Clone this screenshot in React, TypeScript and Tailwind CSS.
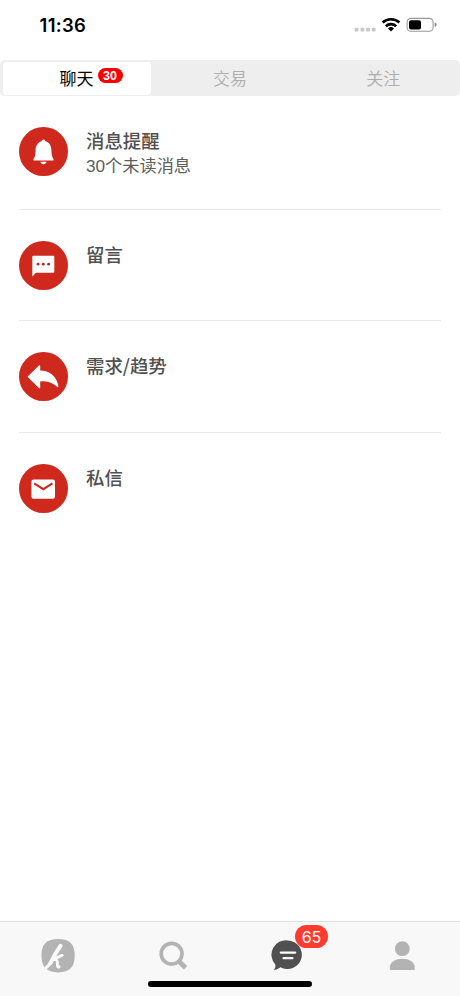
import type { ReactNode } from 'react';

const CJK = "font-['Liberation_Sans','Noto_Sans_CJK_SC',sans-serif]";

function StatusBar() {
  return (
    <header className="flex h-[60px] shrink-0 items-start justify-between pr-[23px] pl-[39.5px]">
      <span className="mt-[13px] font-['Inter',sans-serif] text-[18.4px] leading-6 font-semibold tracking-[0.35px] text-black">11:36</span>
      <svg className="mt-4 h-[18px] w-[84px]" viewBox="0 0 84 18" fill="none">
        <g fill="#c8c8c8">
          <rect x="1.7" y="11.8" width="3.8" height="3.8" rx="1" />
          <rect x="7.5" y="11.8" width="3.8" height="3.8" rx="1" />
          <rect x="13.1" y="11.8" width="3.8" height="3.8" rx="1" />
          <rect x="18.8" y="11.8" width="3.8" height="3.8" rx="1" />
        </g>
        <g stroke="#000" strokeWidth="2.7">
          <path d="M29.6 6.6a12.2 12.2 0 0 1 16.8 0" />
          <path d="M32.9 10.2a7.5 7.5 0 0 1 10.2 0" />
        </g>
        <path d="M35 12.4a4.4 4.4 0 0 1 6 0L38 15.4z" fill="#000" />
        <rect x="54.1" y="2.4" width="26" height="12.8" rx="3.8" stroke="#999" strokeWidth="1.1" />
        <rect x="56" y="4.3" width="12" height="9.2" rx="2" fill="#000" />
        <path d="M81.7 6.5q2 .6 2 2.2t-2 2.2z" fill="#888" />
      </svg>
    </header>
  );
}

function Tabs() {
  return (
    <nav className="grid h-9 shrink-0 grid-cols-3 rounded-[5px] bg-[#eeeeee] text-[17px] leading-[34px] font-[350] text-[#adadad]">
      <div className="mt-[2px] mr-[2.3px] mb-[1.5px] ml-[3px] flex h-[32.5px] justify-center rounded-[3px] bg-white text-black">
        <span className="relative top-px -left-[0.5px] h-[31px] font-normal">
          聊天
          <span className="absolute top-[5px] left-[38px] flex h-[15px] w-[25px] items-center justify-center rounded-full bg-[#fb0000] pt-px font-['Liberation_Sans',sans-serif] text-[12.5px] leading-none font-bold text-white">30</span>
        </span>
      </div>
      <div className="pt-[3px] text-center">交易</div>
      <div className="pt-[3px] text-center">关注</div>
    </nav>
  );
}

type RowProps = { title: string; subtitle?: string; size: string; last?: boolean; children: ReactNode };

function Row({ title, subtitle, size, last, children }: RowProps) {
  return (
    <section className={`mr-[19px] ml-[19px] flex shrink-0 ${size} ${last ? '' : 'border-b border-[#e8e8e8]'}`}>
      <svg className="size-[49px] shrink-0 overflow-visible" viewBox="0 0 49 49" fill="none">
        <circle cx="24.5" cy="24.5" r="24.5" fill="#cf291d" />
        {children}
      </svg>
      <div className="ml-[18px] text-[#505050]">
        <h2 className="font-['Noto_Sans_CJK_SC',sans-serif] text-[18.4px] leading-[26px] font-medium">{title}</h2>
        {subtitle && <p className="mt-[0.5px] text-[17.2px] leading-[26px] text-[#5c5c5c]">{subtitle}</p>}
      </div>
    </section>
  );
}

function TabBar() {
  return (
    <footer className="flex h-[75px] shrink-0 flex-col items-center border-t border-[#e0e0e0] bg-[#f8f8f8]">
      <div className="grid h-[59px] w-full grid-cols-4 justify-items-center pt-[13px]">
        <svg className="size-10" viewBox="0 0 40 40" fill="none">
          <path d="M20.1 4C31.6 4 36.7 9 36.7 20.6c0 11.8-5.1 16.8-16.6 16.8S3.5 32.4 3.5 20.6C3.5 9 8.6 4 20.1 4Z" fill="#b3b3b3" />
          <g stroke="#fafafa" strokeLinecap="round" strokeLinejoin="round">
            <path d="M22.6 10.8C18.8 16 15 22.7 12.6 28" strokeWidth="4" />
            <path d="M12.8 27c-1 2.1-2.2 4-4.4 5.5" strokeWidth="3.2" />
            <path d="M24.3 20.3c-2.6.4-5.3 2.4-8 4.1 2.8.2 3.5 2.1 3.1 5.1-.2 2.2.6 3 1.9 2.2" strokeWidth="2.8" />
          </g>
        </svg>
        <svg className="size-10" viewBox="0 0 40 40" fill="none" stroke="#b3b3b3">
          <circle cx="18.6" cy="18.7" r="10.4" strokeWidth="3.7" />
          <path d="m26 26.5 6.6 6.2" strokeWidth="5" />
        </svg>
        <div className="relative size-10">
          <svg className="size-10" viewBox="0 0 40 40" fill="none">
            <path d="M20 5.5a14.3 14.3 0 1 1-7.6 26.7c-1.8 1.3-4 2.4-6.6 2.8 1.4-1.5 1.9-3.5 1.5-5.6A14.3 14.3 0 0 1 20 5.5Z" fill="#505050" />
            <path d="M12.8 17.6h14.4M15.6 23.2h8.8" stroke="#fff" strokeWidth="2.3" strokeLinecap="round" />
          </svg>
          <span className="absolute -top-[10px] left-[27.5px] flex h-[23px] w-[33px] items-center justify-center rounded-full bg-[#ff3b30] font-['Inter',sans-serif] text-[16px] leading-none font-normal text-white">65</span>
        </div>
        <svg className="size-10" viewBox="0 0 40 40" fill="#b3b3b3">
          <circle cx="19.3" cy="13.7" r="7.4" />
          <path d="M6.9 35v-3.2c0-4.6 6-8.1 12.4-8.1s12.4 3.5 12.4 8.1V35z" />
        </svg>
      </div>
      <div className="h-[6px] w-[164px] rounded-full bg-black" />
    </footer>
  );
}

export default function App() {
  return (
    <div className={`flex h-[996px] w-[460px] flex-col overflow-hidden bg-white ${CJK}`}>
      <StatusBar />
      <Tabs />
      <main className="flex flex-1 flex-col pt-[30.5px]">
        <Row title="消息提醒" subtitle="30个未读消息" size="h-[83.5px]">
          <path fill="#fff" d="M24.5 12.5c1.1 0 1.8.7 1.9 1.8 4.2 1.3 5.8 4.4 6 9 .2 4.7.6 6.9 2.1 8.6v1.6h-20v-1.6c1.5-1.7 1.9-3.9 2.1-8.6.2-4.6 1.8-7.7 6-9 .1-1.1.8-1.8 1.9-1.8Zm-3.1 22.2h6.2c-.4 3.3-5.8 3.3-6.2 0Z" />
        </Row>
        <Row title="留言" size="mt-[30.5px] h-[80.5px]">
          <path fill="#fff" d="M14.2 14.8h20.2q.9 0 .9.9v15q0 1-.9 1H17l-3.7 3.8V15.7q0-.9.9-.9Z" />
          <g fill="#b92724">
            <circle cx="19" cy="23.2" r="1.4" />
            <circle cx="24.3" cy="23.2" r="1.4" />
            <circle cx="29.6" cy="23.2" r="1.4" />
          </g>
        </Row>
        <Row title="需求/趋势" size="mt-[31px] h-[80.5px]">
          <path d="M20.6 13.8v5.3c9.3-.3 16.6 5.6 18.2 15.5-4.9-4.6-10.5-6.6-18.2-5.7v6.8L9.4 24.7Z" fill="#fff" stroke="#fff" strokeWidth="1.2" strokeLinejoin="round" />
        </Row>
        <Row title="私信" size="mt-[31px] h-[80px]" last>
          <rect x="12.4" y="15.5" width="23.6" height="19.2" rx="2.2" fill="#fff" />
          <path d="m15.2 19.4 9.1 5.8 9.1-5.8" stroke="#cf291d" strokeWidth="2" />
        </Row>
      </main>
      <TabBar />
    </div>
  );
}
